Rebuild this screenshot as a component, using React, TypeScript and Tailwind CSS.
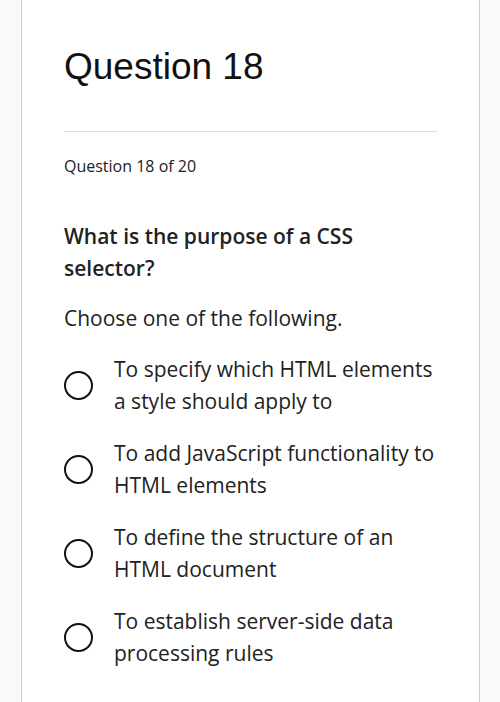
const options = [
  'To specify which HTML elements a style should apply to',
  'To add JavaScript functionality to HTML elements',
  'To define the structure of an HTML document',
  'To establish server-side data processing rules',
];

export default function App() {
  return (
    <div className="min-h-screen bg-[#f9f9f9] font-['Open_Sans',sans-serif] text-[#222]">
      <div className="ml-[21px] w-[459px] min-h-[702px] border-x border-[#cfcfcf] bg-white px-[42px] pt-[45px]">
        {/* Header */}
        <h1 className="font-['Liberation_Sans',sans-serif] text-[37px] leading-[44px] text-[#111]">
          Question 18
        </h1>
        <div className="mt-[42px] h-px bg-[#dddddd]" />

        <p className="mt-[23px] text-[16px] font-medium leading-[22px]">Question 18 of 20</p>

        <h2 className="mt-[43px] w-[310px] text-[21px] font-semibold leading-[32px]">
          What is the purpose of a CSS selector?
        </h2>
        <p className="mt-[18px] text-[21px] leading-[32px]">Choose one of the following.</p>

        {/* Options */}
        <div className="mt-[19px] flex flex-col gap-[20px]">
          {options.map((opt) => (
            <label key={opt} className="flex items-center gap-[21px]">
              <span className="h-[29px] w-[29px] shrink-0 rounded-full border-2 border-[#111]" />
              <span className="w-[321px] text-[21px] leading-[32px]">{opt}</span>
            </label>
          ))}
        </div>
      </div>
    </div>
  );
}
